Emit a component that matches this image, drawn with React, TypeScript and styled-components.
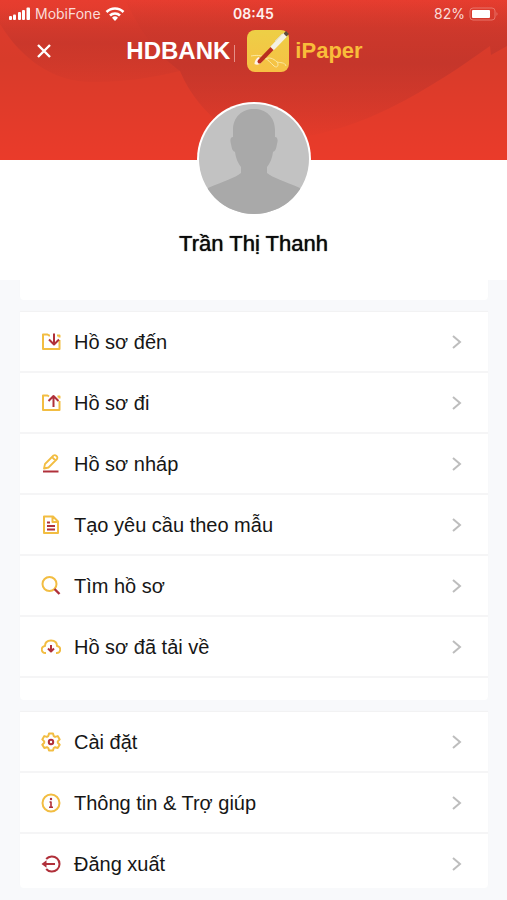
import React from "react";
import styled, { createGlobalStyle } from "styled-components";

const GlobalStyle = createGlobalStyle`
  *, *::before, *::after { box-sizing: border-box; }
  body {
    margin: 0;
    background: #f8f9fb;
    color: #111;
    font-family: "Liberation Sans", Arial, sans-serif;
  }
`;

const Screen = styled.div`
  display: flex;
  flex-direction: column;
  min-height: 100vh;
`;

const Header = styled.header`
  position: relative;
  height: 160px;
  color: #fff;
  background: linear-gradient(#e73d2f 0, #db3b2c 28px, #d83b2a 60px, #ea3b2a 160px);
`;

const HeaderArt = styled.svg`
  position: absolute;
  inset: 0;
  width: 100%;
  height: 100%;
`;

const StatusBar = styled.div`
  position: relative;
  display: grid;
  grid-template-columns: 1fr auto 1fr;
  align-items: center;
  height: 28px;
  padding: 0 8px;
  font: 400 14px/20px Inter, sans-serif;
`;

const StatusGroup = styled.div<{ $end?: boolean }>`
  display: flex;
  align-items: center;
  justify-content: ${(p) => (p.$end ? "flex-end" : "flex-start")};
  gap: 4px;
  color: #fbdcd8;
`;

const Clock = styled.time`
  font-weight: 600;
  color: #fff0ee;
`;

const NavBar = styled.div`
  position: relative;
  display: grid;
  grid-template-columns: 88px 1fr 106px;
  align-items: center;
  height: 46px;
`;

const CloseButton = styled.button`
  display: flex;
  align-items: center;
  justify-content: center;
  width: 88px;
  height: 44px;
  padding: 0;
  border: 0;
  background: none;
  color: #fff;
  cursor: pointer;
`;

const Brand = styled.div`
  display: flex;
  align-items: center;
  justify-content: center;
  white-space: nowrap;
`;

const BankName = styled.span`
  font: 700 24px/32px "Liberation Sans", Arial, sans-serif;
`;

const Divider = styled.span`
  width: 1px;
  height: 17px;
  margin: 4px 12px 0 4px;
  background: #e58f87;
`;

const ProductName = styled.span`
  margin-left: 6px;
  font: 700 22px/32px "Liberation Sans", Arial, sans-serif;
  color: #f9bd3a;
`;

const Profile = styled.section`
  position: relative;
  display: flex;
  flex-direction: column;
  align-items: center;
  height: 120px;
  background: #fff;
`;

const Avatar = styled.svg`
  width: 116px;
  height: 116px;
  margin-top: -59px;
`;

const UserName = styled.h1`
  margin: 13px 0 0;
  font-size: 22px;
  line-height: 28px;
  font-weight: 400;
  color: #0a0a0a;
  text-shadow: 0 0 1px #0a0a0a;
`;

const Menu = styled.nav`
  display: flex;
  flex-direction: column;
  gap: 12px;
  padding: 0 19px 12px 20px;
`;

const Card = styled.ul<{ $space?: number }>`
  margin: 0;
  padding: 0 0 ${(p) => p.$space ?? 0}px;
  list-style: none;
  background: #fff;
  border-radius: 0 0 4px 4px;
  box-shadow: 0 -1px 1px #f1f1f2;
`;

const Item = styled.li`
  border-bottom: 2px solid #f5f5f6;
`;

const LastItem = styled.li`
  height: 54px;
`;

const ItemLink = styled.a`
  display: grid;
  grid-template-columns: 20px 1fr 12px;
  align-items: center;
  column-gap: 13px;
  padding: 18px 25px 17px 21px;
  font-size: 20px;
  line-height: 24px;
  color: #161616;
  text-decoration: none;
`;

const Icon = styled.svg`
  width: 20px;
  height: 20px;
  fill: none;
  stroke: #f2bd42;
  stroke-width: 2;
  stroke-linejoin: round;
  .accent { stroke: #b0303a; }
  .dot { fill: #b0303a; stroke: none; }
`;

const Chevron = styled.svg`
  width: 12px;
  height: 16px;
  fill: none;
  stroke: #bdbdbd;
  stroke-width: 2;
`;

type IconName = "inbox" | "outbox" | "draft" | "form" | "search" | "download" | "settings" | "info" | "logout";

const drawings: Record<IconName, React.ReactNode> = {
  inbox: (
    <>
      <path d="M9 3.500H8L6.500 2.500H2V17h16.500V8M18.500 5.500V3.500H16" />
      <path className="accent" d="M13 1.500v10.500M8 7.500l5 5 5-5" />
    </>
  ),
  outbox: (
    <>
      <path d="M8 3.500L6.500 2.500H2V17h16.500V8M18.500 5.500V3.500H16.500" />
      <path className="accent" d="M12.500 14V3M7.500 8l5-5 5 5" />
    </>
  ),
  draft: (
    <>
      <path strokeWidth="1.8" d="M3 14.500l1-4.500L12.500 1.500q1.500-1 3 .5t.5 3L7.500 13.500zM11.500 3.500l3 3" />
      <path className="accent" d="M2 17.500h15.500" />
    </>
  ),
  form: (
    <>
      <path d="M3 1.500h9l5 5V18H3zM11.500 2v5H17" />
      <path className="accent" d="M6 7.500h3M6 11h8M6 14.500h8" />
    </>
  ),
  search: (
    <>
      <circle cx="8.500" cy="8" r="7" />
      <path className="accent" d="M13.500 13l5 5" strokeWidth="2.400" />
    </>
  ),
  download: (
    <>
      <path d="M5 16H4.500a3.300 3.300 0 0 1-.5-7C4 5.500 6.500 3.500 10 3.500S16 5.500 16 9a3.300 3.300 0 0 1-.5 7H15" />
      <path className="accent" d="M10 8v7M7 11.500l3 3 3-3" />
    </>
  ),
  settings: (
    <>
      <path d="M8 1.500h4l.7 2.600 1.400.8 2.600-.8 2 3.300-1.900 2v1.300l1.900 2-2 3.300-2.600-.8-1.400.8-.7 2.500H8L7.300 16l-1.400-.8-2.600.8-2-3.300 1.900-2V9.400l-1.900-2 2-3.300 2.600.8 1.400-.8z" />
      <circle className="accent" cx="10" cy="10" r="2.200" />
    </>
  ),
  info: (
    <>
      <circle cx="10" cy="10" r="8.500" />
      <path className="accent" d="M8.500 9H10v5M8 14.200h4" strokeWidth="1.600" />
      <circle className="dot" cx="10" cy="6" r="1.200" />
    </>
  ),
  logout: (
    <>
      <path className="accent" d="M5.200 5a7.600 7.600 0 1 1 0 10" />
      <path className="accent" d="M3 10h11" />
      <path className="dot" d="M0.500 10l5-3.700v7.400z" />
    </>
  ),
};

const mainItems: { icon: IconName; label: string }[] = [
  { icon: "inbox", label: "Hồ sơ đến" },
  { icon: "outbox", label: "Hồ sơ đi" },
  { icon: "draft", label: "Hồ sơ nháp" },
  { icon: "form", label: "Tạo yêu cầu theo mẫu" },
  { icon: "search", label: "Tìm hồ sơ" },
  { icon: "download", label: "Hồ sơ đã tải về" },
];

const systemItems: { icon: IconName; label: string }[] = [
  { icon: "settings", label: "Cài đặt" },
  { icon: "info", label: "Thông tin & Trợ giúp" },
];

function MenuLink({ icon, label }: { icon: IconName; label: string }) {
  return (
    <ItemLink href="#">
      <Icon viewBox="0 0 20 20" aria-hidden="true">{drawings[icon]}</Icon>
      <span>{label}</span>
      <Chevron viewBox="0 0 12 16" aria-hidden="true">
        <path d="M2 2l7 6-7 6" />
      </Chevron>
    </ItemLink>
  );
}

function SignalIcon() {
  return (
    <svg width="23" height="14" viewBox="0 0 23 14" fill="#fff" aria-hidden="true">
      <rect x="1" y="9" width="3" height="4" rx="1" />
      <rect x="5" y="7.500" width="3" height="5.500" rx="1" />
      <rect x="10" y="5" width="3" height="8" rx="1" />
      <rect x="14" y="3" width="3" height="10" rx="1" />
      <rect x="18.500" y="0.500" width="3.500" height="12.500" rx="1" />
    </svg>
  );
}

function WifiIcon() {
  return (
    <svg width="20" height="15" viewBox="0 0 20 15" fill="none" stroke="#fff" strokeWidth="2.600" aria-hidden="true">
      <path d="M1.500 5a12 12 0 0 1 17 0M5 8.500a7.200 7.200 0 0 1 10 0" />
      <path d="M7 10.700a4.300 4.300 0 0 1 6 0L10 14z" fill="#fff" stroke="none" />
    </svg>
  );
}

function BatteryIcon() {
  return (
    <svg width="30" height="14" viewBox="0 0 30 14" aria-hidden="true">
      <rect x="1" y="1" width="25" height="12" rx="3" fill="none" stroke="#e8756a" />
      <rect x="3" y="3" width="18" height="8" rx="1" fill="#fff" />
      <path d="M27.500 5q2 2 0 4z" fill="#e8756a" />
    </svg>
  );
}

function PaperLogo() {
  return (
    <svg width="42" height="42" viewBox="0 0 42 42" aria-hidden="true">
      <defs>
        <linearGradient id="gold" x1="0" y1="0" x2="0" y2="1">
          <stop offset="0" stopColor="#edcf46" />
          <stop offset="1" stopColor="#f7c044" />
        </linearGradient>
      </defs>
      <rect width="42" height="42" rx="8" fill="url(#gold)" />
      <path d="M4 26c5-1 11-1 14 2 3 2 6 5 9 8 4 3 5-2 3-4 3 1 8 0 9 4M18 29c4-2 8-1 12 3" fill="none" stroke="#fbe8a0" strokeWidth="1" />
      <path d="M7.500 34c0-3 2-6 4-7l4 4c-2 3-5 5-8 3z" fill="#fff3e6" />
      <path d="M12.500 31.500L26 17.500" stroke="#b82d20" strokeWidth="4" strokeLinecap="round" />
      <path d="M25 18.500L38.500 4.500" stroke="#f4f1e4" strokeWidth="5" />
      <path d="M38 5l2.500-2.500" stroke="#5d4b3c" strokeWidth="4" />
      <path d="M28 11l7-7" stroke="#dfd9bd" strokeWidth="1" />
    </svg>
  );
}

export default function App() {
  return (
    <Screen>
      <GlobalStyle />
      <Header>
        <HeaderArt viewBox="0 0 507 160" preserveAspectRatio="none" aria-hidden="true">
          <defs>
            <linearGradient id="rightShade" gradientUnits="userSpaceOnUse" x1="0" y1="0" x2="0" y2="140">
              <stop offset="0" stopColor="#c2352b" stopOpacity="0" />
              <stop offset="0.250" stopColor="#c2352b" stopOpacity="0.600" />
              <stop offset="0.450" stopColor="#c2352b" stopOpacity="0.850" />
              <stop offset="1" stopColor="#c2352b" stopOpacity="0" />
            </linearGradient>
            <linearGradient id="leftShade" gradientUnits="userSpaceOnUse" x1="0" y1="8" x2="0" y2="86">
              <stop offset="0" stopColor="#c2352b" stopOpacity="0" />
              <stop offset="0.450" stopColor="#c2352b" stopOpacity="0.650" />
              <stop offset="1" stopColor="#c2352b" stopOpacity="0.100" />
            </linearGradient>
          </defs>
          <path d="M0 0V24C22 60 55 83 95 82C125 82 150 78 180 71C165 60 145 40 125 0z" fill="url(#leftShade)" />
          <path
            d="M125 0C145 40 162 58 180 71C190 95 205 112 225 128C250 138 280 140 300 138C330 132 360 123 390 108C430 88 462 66 490 46L491 55L507 46V0z"
            fill="url(#rightShade)"
          />
        </HeaderArt>
        <StatusBar>
          <StatusGroup>
            <SignalIcon />
            <span>MobiFone</span>
            <WifiIcon />
          </StatusGroup>
          <Clock>08:45</Clock>
          <StatusGroup $end>
            <span>82%</span>
            <BatteryIcon />
          </StatusGroup>
        </StatusBar>
        <NavBar>
          <CloseButton type="button" aria-label="Đóng">
            <svg width="14" height="14" viewBox="0 0 14 14" fill="none" stroke="currentColor" strokeWidth="2.400" aria-hidden="true">
              <path d="M1 1l12 12M13 1L1 13" />
            </svg>
          </CloseButton>
          <Brand>
            <BankName>HDBANK</BankName>
            <Divider />
            <PaperLogo />
            <ProductName>iPaper</ProductName>
          </Brand>
        </NavBar>
      </Header>
      <Profile>
        <Avatar viewBox="0 0 116 116" role="img" aria-label="Trần Thị Thanh">
          <defs>
            <clipPath id="face">
              <circle cx="58" cy="58" r="55" />
            </clipPath>
          </defs>
          <circle cx="58" cy="58" r="57" fill="#fff" />
          <g clipPath="url(#face)">
            <rect width="116" height="116" fill="#c2c2c2" />
            <path
              d="M37 29C37 16 46 8 58 8S79 16 79 29V36C82 36 82 40 81 43C80 49 79 50 77 51C76 58 74 62 71 66V72C77 77 88 80 104 87L108 94V116H8V94L12 87C28 80 39 77 45 72V66C42 62 40 58 39 51C37 50 36 49 35 43C34 40 34 36 37 36z"
              fill="#a9a9a9"
            />
          </g>
        </Avatar>
        <UserName>Trần Thị Thanh</UserName>
      </Profile>
      <Menu>
        <Card $space={20} aria-hidden="true" />
        <Card $space={22}>
          {mainItems.map((item) => (
            <Item key={item.label}><MenuLink {...item} /></Item>
          ))}
        </Card>
        <Card>
          {systemItems.map((item) => (
            <Item key={item.label}><MenuLink {...item} /></Item>
          ))}
          <LastItem><MenuLink icon="logout" label="Đăng xuất" /></LastItem>
        </Card>
      </Menu>
    </Screen>
  );
}
